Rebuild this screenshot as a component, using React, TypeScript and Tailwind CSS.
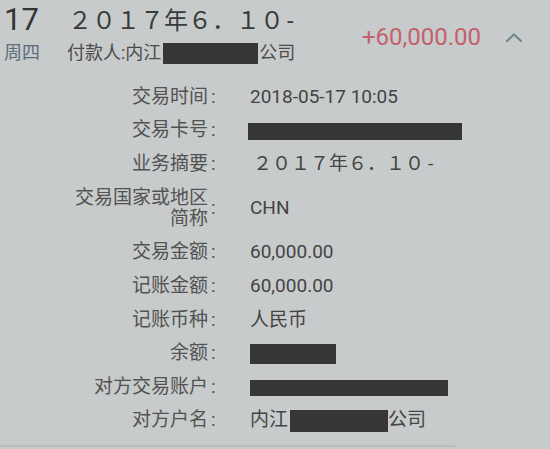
const font = { fontFamily: '"Roboto", "Noto Sans CJK SC", sans-serif' };

function Redact({ w, h }: { w: number; h: number }) {
  return (
    <span
      className="inline-block bg-[#363636] align-middle"
      style={{ width: w, height: h }}
    />
  );
}

type Row = {
  label: React.ReactNode;
  value: React.ReactNode;
  tall?: boolean;
};

const rows: Row[] = [
  { label: '交易时间', value: '2018-05-17 10:05' },
  { label: '交易卡号', value: <span className="ml-[-2px]"><Redact w={214} h={17} /></span> },
  {
    label: '业务摘要',
    value: (
      <span className="ml-[3px]">
        ２０１７年６．１０<span className="ml-[4px]">-</span>
      </span>
    ),
  },
  {
    label: (
      <span className="block leading-[21px]">
        交易国家或地区
        <br />
        简称
      </span>
    ),
    value: 'CHN',
    tall: true,
  },
  { label: '交易金额', value: '60,000.00' },
  { label: '记账金额', value: '60,000.00' },
  { label: '记账币种', value: '人民币' },
  { label: '余额', value: <Redact w={86} h={20} /> },
  { label: '对方交易账户', value: <Redact w={198} h={16} /> },
  {
    label: '对方户名',
    value: (
      <span className="flex items-center">
        内江
        <span className="ml-[2px]">
          <Redact w={98} h={22} />
        </span>
        公司
      </span>
    ),
  },
];

export default function App() {
  return (
    <div className="w-[550px] h-[449px] bg-[#c8cbcb] overflow-hidden" style={font}>
      {/* header */}
      <div className="flex h-[80px]">
        <div className="w-[68px] pl-[4px]">
          <div className="h-[38px] flex items-center text-[31px] text-[#333] leading-none pt-[1px]">17</div>
          <div className="h-[28px] flex items-center text-[18px] text-[#5a6d7d]">周四</div>
        </div>
        <div className="flex-1">
          <div className="h-[38px] flex items-center text-[24px] text-[#3a3a3a] pt-[4px]">
            ２０１７年６．１０<span className="ml-[3px]">-</span>
          </div>
          <div className="h-[28px] flex items-center text-[18px] text-[#4c4c4c] ml-[-1px]">
            付款人:内江
            <span className="ml-[2px] mr-[1px]">
              <Redact w={95} h={21} />
            </span>
            公司
          </div>
        </div>
        <div className="flex items-start pt-[22px] pr-[26px]">
          <span className="text-[24px] text-[#c2606c] leading-[30px]">+60,000.00</span>
          <svg
            className="ml-[23px] mt-[10px]"
            width="20"
            height="12"
            viewBox="0 0 20 12"
            fill="none"
            stroke="#6e8a86"
            strokeWidth="2.2"
            strokeLinecap="round"
            strokeLinejoin="round"
          >
            <path d="M3 9 L10 2.5 L17 9" />
          </svg>
        </div>
      </div>

      {/* details */}
      <div className="flex flex-col">
        {rows.map((r, i) => (
          <div
            key={i}
            className={`flex items-center text-[19px] ${r.tall ? 'h-[55px]' : 'h-[33.6px]'}`}
          >
            <div className="w-[208px] text-right text-[#525252] whitespace-nowrap">{r.label}</div>
            <div className="w-[42px] pl-[3px] text-[#525252]">:</div>
            <div className="text-[#444]">{r.value}</div>
          </div>
        ))}
      </div>

      <div className="mt-[8px] w-[455px] h-[2px] bg-[#babdbd]" />
    </div>
  );
}
